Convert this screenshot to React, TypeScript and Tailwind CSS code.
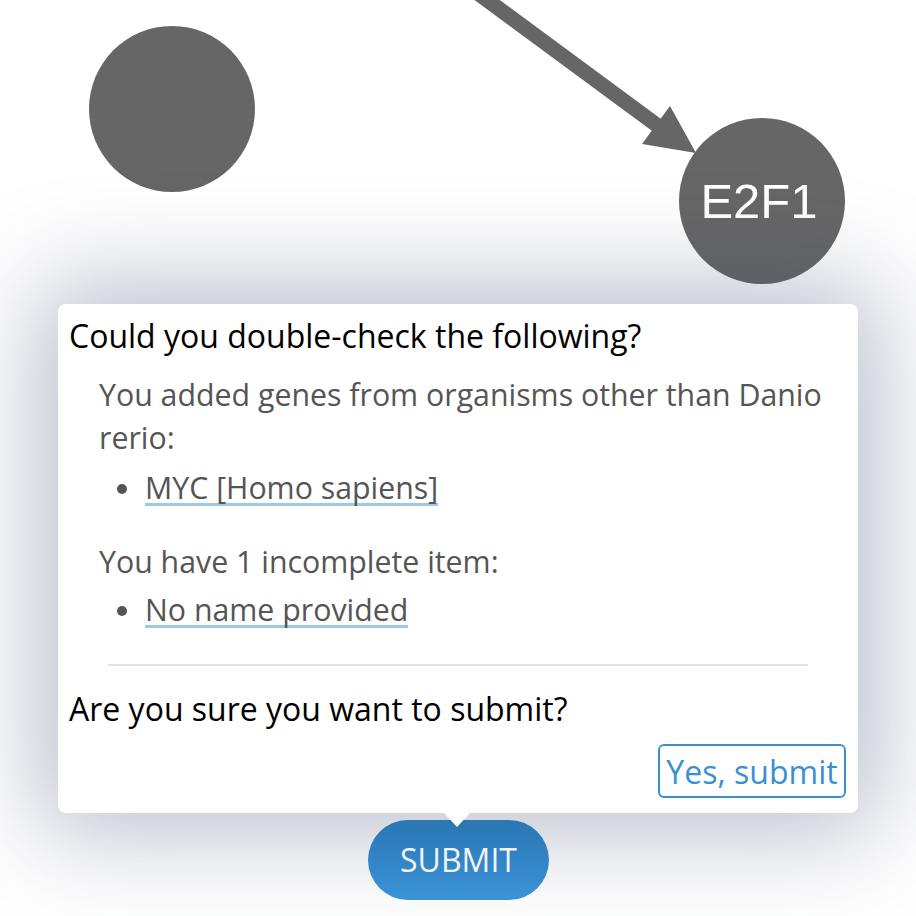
import React from "react";

export default function App() {
  return (
    <div
      className="relative w-[916px] h-[916px] overflow-hidden bg-white"
      style={{ fontFamily: '"Open Sans", sans-serif' }}
    >
      <svg className="absolute left-0 top-0" width="916" height="916" viewBox="0 0 916 916">
        <line x1="460" y1="-20" x2="658" y2="126" stroke="#666666" strokeWidth="15" />
        <polygon points="696,153 642,144 670,106" fill="#666666" />
        <circle cx="172" cy="109" r="83" fill="#666666" />
        <circle cx="762" cy="201" r="83" fill="#666666" />
        <text
          x="759"
          y="218"
          textAnchor="middle"
          fill="#ffffff"
          fontSize="49"
          style={{ fontFamily: '"Liberation Sans", Arial, sans-serif' }}
        >
          E2F1
        </text>
      </svg>

      <div className="absolute left-[58px] top-[304px] w-[800px] h-[509px] rounded-[8px] bg-white shadow-[0_0_100px_20px_rgba(60,70,110,0.35)] pt-[10px] pl-[11px] pr-[12px] text-[32px] leading-[43px] text-black">
        <div>Could you double-check the following?</div>
        <div className="ml-[30px] mt-[16px] text-[#555555] text-[30.3px] leading-[43px]">
          <div>You added genes from organisms other than Danio rerio:</div>
          <div className="mt-[9px] flex items-center h-[42px]">
            <span className="ml-[18px] w-[10px] h-[10px] rounded-full bg-[#555555]"></span>
            <span className="ml-[18px] inline-block leading-[30px] border-b-[3px] border-[#9cc8ec]">
              MYC [Homo sapiens]
            </span>
          </div>
          <div className="mt-[30px]">You have 1 incomplete item:</div>
          <div className="mt-[7px] flex items-center h-[42px]">
            <span className="ml-[18px] w-[10px] h-[10px] rounded-full bg-[#555555]"></span>
            <span className="ml-[18px] inline-block leading-[30px] border-b-[3px] border-[#9cc8ec]">
              No name provided
            </span>
          </div>
        </div>
        <div className="mt-[32px] ml-[39px] mr-[38px] h-[2px] bg-[#e2e2e2]"></div>
        <div className="mt-[21px]">Are you sure you want to submit?</div>
        <div className="mt-[14px] flex justify-end">
          <button className="h-[54px] w-[188px] rounded-[6px] border-2 border-[#3b8fd5] text-[#3b8fd5] text-[32px] leading-[52px] text-center">
            Yes, submit
          </button>
        </div>
        <div className="absolute left-[385px] bottom-[-14px] w-0 h-0 border-l-[14px] border-r-[14px] border-t-[15px] border-l-transparent border-r-transparent border-t-white z-10"></div>
      </div>

      <button className="absolute left-[368px] top-[820px] w-[181px] h-[80px] rounded-full bg-gradient-to-b from-[#2b76b4] to-[#3a93d8] text-[#f0f4fa] text-[32px]">
        SUBMIT
      </button>
    </div>
  );
}
